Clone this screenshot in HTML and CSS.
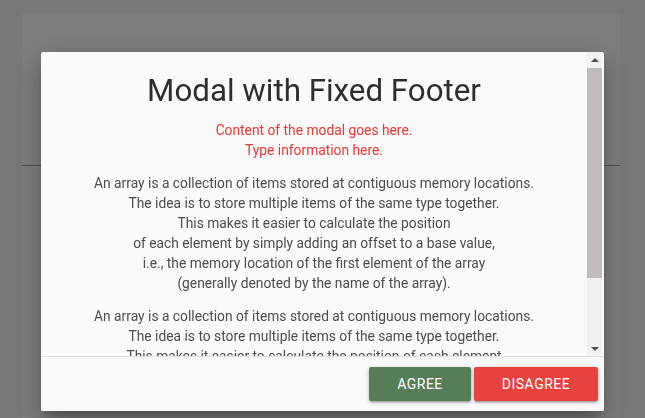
FILE: index.html
```html
<!DOCTYPE html>
<html lang="en">
<head>
<meta charset="utf-8">
<title>Modal with Fixed Footer</title>
<link rel="stylesheet" href="styles.css">
</head>
<body>
  <div class="page">
    <div class="page-top"></div>
  </div>
  <div class="overlay"></div>
  <div class="modal">
    <div class="modal-body">
      <div class="modal-content">
        <h4 class="modal-title">Modal with Fixed Footer</h4>
        <p class="note">Content of the modal goes here.<br>Type information here.</p>
        <p class="body-text">An array is a collection of items stored at contiguous memory locations.<br>The idea is to store multiple items of the same type together.<br>This makes it easier to calculate the position<br>of each element by simply adding an offset to a base value,<br>i.e., the memory location of the first element of the array<br>(generally denoted by the name of the array).</p>
        <p class="body-text">An array is a collection of items stored at contiguous memory locations.<br>The idea is to store multiple items of the same type together.<br>This makes it easier to calculate the position of each element</p>
      </div>
      <div class="scrollbar" aria-hidden="true">
        <div class="sb-btn"><span class="arrow-up"></span></div>
        <div class="sb-track"><div class="sb-thumb"></div></div>
        <div class="sb-btn"><span class="arrow-down"></span></div>
      </div>
    </div>
    <div class="modal-footer">
      <button class="btn btn-agree">Agree</button>
      <button class="btn btn-disagree">Disagree</button>
    </div>
  </div>
</body>
</html>
```
FILE: styles.css
```css
html, body {
  margin: 0;
  padding: 0;
  height: 100%;
}
body {
  background: #7b7b7b;
  font-family: Roboto, "Liberation Sans", sans-serif;
  overflow: hidden;
}
.page {
  margin: 14px 25px 0 22px;
  height: 404px;
  background: #808080;
}
.page-top {
  height: 151px;
  border-bottom: 1px solid #4a5a4a;
}
.overlay {
  position: fixed;
  inset: 0;
  background: rgba(0, 0, 0, 0.02);
}
.modal {
  position: fixed;
  left: 41px;
  top: 52px;
  width: 563px;
  height: 359px;
  background: #fafafa;
  border-radius: 2px;
  box-shadow: 0 16px 24px 2px rgba(0,0,0,0.14), 0 6px 30px 5px rgba(0,0,0,0.12), 0 8px 10px -5px rgba(0,0,0,0.3);
  display: flex;
  flex-direction: column;
  overflow: hidden;
}
.modal-body {
  flex: 1;
  min-height: 0;
  display: flex;
  padding-right: 2px;
}
.modal-content {
  flex: 1;
  min-width: 0;
  overflow: hidden;
  padding: 24px 24px 0;
  text-align: center;
}
.modal-title {
  margin: 0;
  font-size: 31.3px;
  line-height: 30px;
  font-weight: 400;
  color: #2e2e2e;
  white-space: nowrap;
}
.note {
  margin: 14px 0 0;
  font-size: 13.8px;
  line-height: 20px;
  color: #e53935;
}
.body-text {
  margin: 13px 0 0;
  font-size: 13.8px;
  line-height: 20px;
  color: #4d4d4d;
  white-space: nowrap;
}
.scrollbar {
  flex: none;
  width: 15px;
  background: #f1f1f1;
  display: flex;
  flex-direction: column;
}
.sb-btn {
  height: 15px;
  flex: none;
  display: flex;
  align-items: center;
  justify-content: center;
}
.arrow-up {
  width: 0;
  height: 0;
  border-left: 4px solid transparent;
  border-right: 4px solid transparent;
  border-bottom: 4px solid #505050;
}
.arrow-down {
  width: 0;
  height: 0;
  border-left: 4px solid transparent;
  border-right: 4px solid transparent;
  border-top: 4px solid #505050;
}
.sb-track {
  flex: 1;
  padding-top: 1px;
}
.sb-thumb {
  height: 210px;
  background: #c1bcbc;
}
.modal-footer {
  height: 55px;
  flex: none;
  border-top: 1px solid rgba(0,0,0,0.1);
  box-sizing: border-box;
  display: flex;
  justify-content: flex-end;
  align-items: center;
  gap: 3px;
  padding: 0 6px 0 0;
  background: #fafafa;
}
.btn {
  height: 34px;
  border: none;
  border-radius: 2px;
  padding: 0;
  font-family: Roboto, "Liberation Sans", sans-serif;
  font-size: 14px;
  letter-spacing: 0.5px;
  text-transform: uppercase;
  color: #fff;
  box-shadow: 0 2px 2px 0 rgba(0,0,0,0.14), 0 3px 1px -2px rgba(0,0,0,0.12), 0 1px 5px 0 rgba(0,0,0,0.2);
}
.btn-agree {
  background: #557d56;
  width: 102px;
}
.btn-disagree {
  background: #e8423f;
  width: 124px;
}
```
